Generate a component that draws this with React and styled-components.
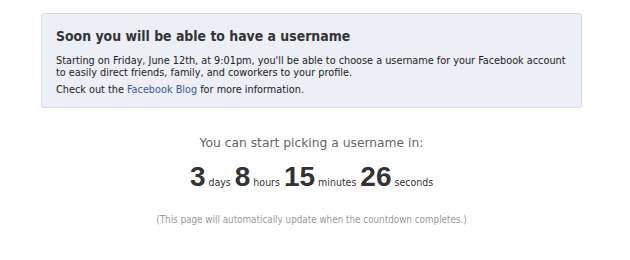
import styled, { createGlobalStyle } from "styled-components";

const GlobalStyle = createGlobalStyle`
  html, body {
    margin: 0;
    padding: 0;
    background: #fff;
  }

  body {
    font-family: "DejaVu Sans Condensed", "DejaVu Sans", sans-serif;
    color: #333;
  }
`;

const Page = styled.div`
  width: 541px;
  padding: 13px 0 0 41px;
`;

const InfoBox = styled.div`
  background-color: #eceff6;
  border: 1px solid #d4dae8;
  border-radius: 3px;
  padding: 13px 14px 11px;
`;

const Heading = styled.h2`
  margin: 0 0 10px;
  font-size: 13.9px;
  line-height: 18px;
  font-weight: 700;
  color: #333;
`;

const Text = styled.p`
  margin: 0;
  font-size: 10.8px;
  line-height: 12px;
  color: #222;

  & + & {
    margin-top: 5px;
  }
`;

const BlogLink = styled.a`
  color: #3b5998;
  text-decoration: none;
`;

const Countdown = styled.div`
  display: flex;
  flex-direction: column;
  align-items: center;
  padding-top: 28px;
`;

const Lead = styled.div`
  font-family: "DejaVu Sans", sans-serif;
  font-size: 12.3px;
  color: #666;
`;

const Timer = styled.div`
  display: flex;
  align-items: baseline;
  gap: 4px;
  margin-top: 11px;
`;

const Unit = styled.span`
  display: inline-flex;
  align-items: baseline;
  gap: 3px;
`;

const Number = styled.span`
  font-family: "Liberation Sans", Arial, sans-serif;
  font-weight: 700;
  font-size: 28px;
  color: #333;
`;

const Label = styled.span`
  font-size: 10.5px;
  color: #333;
`;

const Note = styled.div`
  margin-top: 21px;
  font-size: 9.8px;
  color: #999;
`;

const units = [
  { value: 3, label: "days" },
  { value: 8, label: "hours" },
  { value: 15, label: "minutes" },
  { value: 26, label: "seconds" },
];

export default function App() {
  return (
    <>
      <GlobalStyle />
      <Page>
        <InfoBox>
          <Heading>Soon you will be able to have a username</Heading>
          <Text>
            Starting on Friday, June 12th, at 9:01pm, you'll be able to choose a
            username for your Facebook account to easily direct friends, family,
            and coworkers to your profile.
          </Text>
          <Text>
            Check out the <BlogLink href="#">Facebook Blog</BlogLink> for more
            information.
          </Text>
        </InfoBox>
        <Countdown>
          <Lead>You can start picking a username in:</Lead>
          <Timer>
            {units.map((u) => (
              <Unit key={u.label}>
                <Number>{u.value}</Number>
                <Label>{u.label}</Label>
              </Unit>
            ))}
          </Timer>
          <Note>
            (This page will automatically update when the countdown completes.)
          </Note>
        </Countdown>
      </Page>
    </>
  );
}
